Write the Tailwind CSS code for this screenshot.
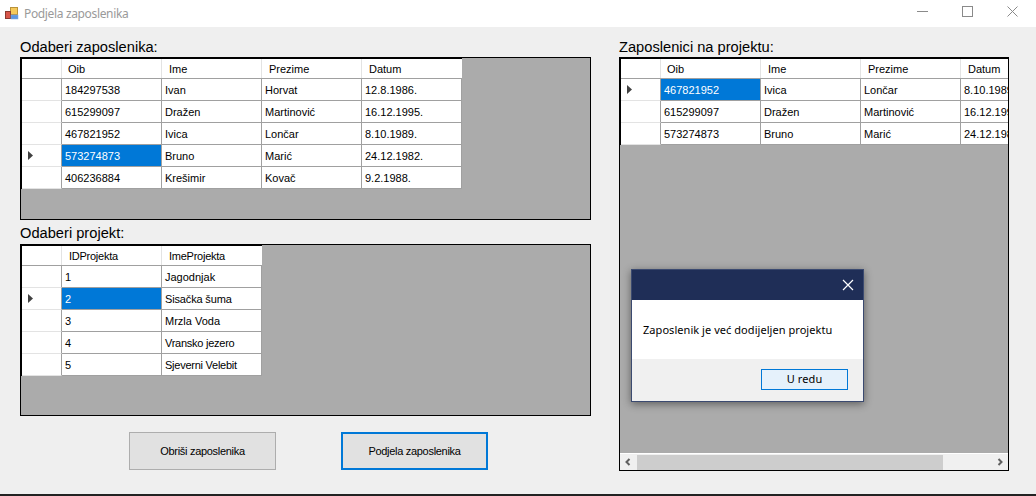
<!doctype html>
<html>
<head>
<meta charset="utf-8">
<script src="https://cdn.jsdelivr.net/npm/@tailwindcss/browser@4"></script>
</head>
<body class="m-0 overflow-hidden">
<div class="relative w-[1036px] h-[496px] bg-[#efefef] flex flex-col font-['Liberation_Sans',sans-serif] text-[11px] text-black">
  <!-- title bar -->
  <div class="h-[27px] bg-white flex items-center shrink-0">
    <svg class="ml-[4px] w-[16px] h-[16px]" viewBox="0 0 16 16">
      <rect x="6.5" y="1.5" width="7" height="7" fill="#f5c95a" stroke="#b8923a"/>
      <rect x="1.5" y="5.5" width="5" height="7" fill="#d8564a" stroke="#8a3a30"/>
      <rect x="7" y="9" width="7" height="4" fill="#5c96e0" stroke="#7fa8dc" stroke-width="0.5"/>
    </svg>
    <div class="ml-[4px] font-['Noto_Sans',sans-serif] text-[12px] tracking-[-0.35px] text-[#9a9a9a]">Podjela zaposlenika</div>
    <div class="ml-auto flex items-center mr-[18px] pb-[5px] gap-[34px]">
      <svg class="w-[11px] h-[11px]" viewBox="0 0 11 11"><path d="M0 5.5H11" stroke="#8a8a8a" fill="none"/></svg>
      <svg class="w-[11px] h-[11px]" viewBox="0 0 11 11"><rect x="0.5" y="0.5" width="10" height="10" stroke="#8a8a8a" fill="none"/></svg>
      <svg class="w-[11px] h-[11px]" viewBox="0 0 11 11"><path d="M0.5 0.5L10.5 10.5M10.5 0.5L0.5 10.5" stroke="#8a8a8a" fill="none"/></svg>
    </div>
  </div>

  <!-- body -->
  <div class="flex flex-1 min-h-0 pl-[20px] border-b-2 border-[#222]">
    <!-- left column -->
    <div class="w-[571px] flex flex-col">
      <div class="h-[30px] pt-[10px] text-[14.67px] leading-[20px]">Odaberi zaposlenika:</div>
      <div class="h-[163px] bg-[#ababab] border border-black">
        <div class="w-[441px] border-l border-t border-black">
          <div class="flex h-[19px] w-[440px] bg-white">
            <div class="w-[40px] border-r border-[#e3e3e3]"></div>
            <div class="w-[100px] pl-[6px] leading-[21px] border-r border-[#e3e3e3]">Oib</div>
            <div class="w-[100px] pl-[7px] leading-[21px] border-r border-[#e3e3e3]">Ime</div>
            <div class="w-[100px] pl-[7px] leading-[21px] border-r border-[#e3e3e3]">Prezime</div>
            <div class="w-[100px] pl-[7px] leading-[21px]">Datum</div>
          </div>
          <div class="flex h-[22px] w-[440px] bg-white border-t border-[#a0a0a0] leading-[23px]">
            <div class="w-[40px] border-r border-[#a0a0a0]"></div>
            <div class="w-[100px] pl-[3px] border-r border-[#a0a0a0]">184297538</div>
            <div class="w-[100px] pl-[3px] border-r border-[#a0a0a0]">Ivan</div>
            <div class="w-[100px] pl-[3px] border-r border-[#a0a0a0]">Horvat</div>
            <div class="w-[100px] pl-[3px] border-r border-[#a0a0a0]">12.8.1986.</div>
          </div>
          <div class="flex h-[22px] w-[440px] bg-white border-t border-[#a0a0a0] leading-[23px]">
            <div class="w-[40px] h-[22px] -mt-px border-t border-t-[#e3e3e3] border-r border-r-[#a0a0a0]"></div>
            <div class="w-[100px] pl-[3px] border-r border-[#a0a0a0]">615299097</div>
            <div class="w-[100px] pl-[3px] border-r border-[#a0a0a0]">Dražen</div>
            <div class="w-[100px] pl-[3px] border-r border-[#a0a0a0]">Martinović</div>
            <div class="w-[100px] pl-[3px] border-r border-[#a0a0a0]">16.12.1995.</div>
          </div>
          <div class="flex h-[22px] w-[440px] bg-white border-t border-[#a0a0a0] leading-[23px]">
            <div class="w-[40px] h-[22px] -mt-px border-t border-t-[#e3e3e3] border-r border-r-[#a0a0a0]"></div>
            <div class="w-[100px] pl-[3px] border-r border-[#a0a0a0]">467821952</div>
            <div class="w-[100px] pl-[3px] border-r border-[#a0a0a0]">Ivica</div>
            <div class="w-[100px] pl-[3px] border-r border-[#a0a0a0]">Lončar</div>
            <div class="w-[100px] pl-[3px] border-r border-[#a0a0a0]">8.10.1989.</div>
          </div>
          <div class="flex h-[22px] w-[440px] bg-white border-t border-[#a0a0a0] leading-[23px]">
            <div class="w-[40px] h-[22px] -mt-px border-t border-t-[#e3e3e3] border-r border-r-[#a0a0a0] flex items-center pl-[6px]"><svg class="w-[5px] h-[9px]" viewBox="0 0 5 9"><path d="M0 0L5 4.5L0 9Z" fill="#404040"/></svg></div>
            <div class="w-[100px] pl-[3px] border-r border-[#a0a0a0] bg-[#0078d7] text-white">573274873</div>
            <div class="w-[100px] pl-[3px] border-r border-[#a0a0a0]">Bruno</div>
            <div class="w-[100px] pl-[3px] border-r border-[#a0a0a0]">Marić</div>
            <div class="w-[100px] pl-[3px] border-r border-[#a0a0a0]">24.12.1982.</div>
          </div>
          <div class="flex h-[23px] w-[440px] bg-white border-y border-[#a0a0a0] leading-[23px]">
            <div class="w-[40px] h-[23px] -mt-px border-y border-y-[#e3e3e3] border-r border-r-[#a0a0a0]"></div>
            <div class="w-[100px] pl-[3px] border-r border-[#a0a0a0]">406236884</div>
            <div class="w-[100px] pl-[3px] border-r border-[#a0a0a0]">Krešimir</div>
            <div class="w-[100px] pl-[3px] border-r border-[#a0a0a0]">Kovač</div>
            <div class="w-[100px] pl-[3px] border-r border-[#a0a0a0]">9.2.1988.</div>
          </div>
        </div>
      </div>

      <div class="h-[24px] pt-[3px] text-[14.67px] leading-[20px]">Odaberi projekt:</div>
      <div class="h-[172px] bg-[#ababab] border border-black">
        <div class="w-[241px] border-l border-t border-black">
          <div class="flex h-[19px] w-[240px] bg-white">
            <div class="w-[40px] border-r border-[#e3e3e3]"></div>
            <div class="w-[100px] pl-[7px] leading-[21px] tracking-[-0.25px] border-r border-[#e3e3e3]">IDProjekta</div>
            <div class="w-[100px] pl-[7px] leading-[21px] tracking-[-0.25px]">ImeProjekta</div>
          </div>
          <div class="flex h-[22px] w-[240px] bg-white border-t border-[#a0a0a0] leading-[23px]">
            <div class="w-[40px] border-r border-[#a0a0a0]"></div>
            <div class="w-[100px] pl-[3px] border-r border-[#a0a0a0]">1</div>
            <div class="w-[100px] pl-[3px] border-r border-[#a0a0a0]">Jagodnjak</div>
          </div>
          <div class="flex h-[22px] w-[240px] bg-white border-t border-[#a0a0a0] leading-[23px]">
            <div class="w-[40px] h-[22px] -mt-px border-t border-t-[#e3e3e3] border-r border-r-[#a0a0a0] flex items-center pl-[6px]"><svg class="w-[5px] h-[9px]" viewBox="0 0 5 9"><path d="M0 0L5 4.5L0 9Z" fill="#404040"/></svg></div>
            <div class="w-[100px] pl-[3px] border-r border-[#a0a0a0] bg-[#0078d7] text-white">2</div>
            <div class="w-[100px] pl-[3px] tracking-[-0.15px] border-r border-[#a0a0a0]">Sisačka šuma</div>
          </div>
          <div class="flex h-[22px] w-[240px] bg-white border-t border-[#a0a0a0] leading-[23px]">
            <div class="w-[40px] h-[22px] -mt-px border-t border-t-[#e3e3e3] border-r border-r-[#a0a0a0]"></div>
            <div class="w-[100px] pl-[3px] border-r border-[#a0a0a0]">3</div>
            <div class="w-[100px] pl-[3px] border-r border-[#a0a0a0]">Mrzla Voda</div>
          </div>
          <div class="flex h-[22px] w-[240px] bg-white border-t border-[#a0a0a0] leading-[23px]">
            <div class="w-[40px] h-[22px] -mt-px border-t border-t-[#e3e3e3] border-r border-r-[#a0a0a0]"></div>
            <div class="w-[100px] pl-[3px] border-r border-[#a0a0a0]">4</div>
            <div class="w-[100px] pl-[3px] tracking-[-0.25px] border-r border-[#a0a0a0]">Vransko jezero</div>
          </div>
          <div class="flex h-[23px] w-[240px] bg-white border-y border-[#a0a0a0] leading-[23px]">
            <div class="w-[40px] h-[23px] -mt-px border-y border-y-[#e3e3e3] border-r border-r-[#a0a0a0]"></div>
            <div class="w-[100px] pl-[3px] border-r border-[#a0a0a0]">5</div>
            <div class="w-[100px] pl-[3px] tracking-[-0.25px] border-r border-[#a0a0a0]">Sjeverni Velebit</div>
          </div>
        </div>
      </div>

      <div class="flex mt-[16px] ml-[109px] gap-[65px]">
        <div class="w-[147px] h-[38px] bg-[#e1e1e1] border border-[#adadad] tracking-[-0.3px] flex items-center justify-center">Obriši zaposlenika</div>
        <div class="w-[147px] h-[38px] bg-[#e1e1e1] border-2 border-[#0078d7] tracking-[-0.3px] flex items-center justify-center">Podjela zaposlenika</div>
      </div>
    </div>

    <!-- right column -->
    <div class="w-[390px] ml-[28px] flex flex-col">
      <div class="h-[30px] pt-[10px] text-[14.67px] leading-[20px]">Zaposlenici na projektu:</div>
      <div class="h-[414px] bg-[#ababab] border border-black flex flex-col">
        <div class="flex-1 min-h-0 overflow-hidden">
          <div class="w-[441px] border-l border-t border-black">
            <div class="flex h-[19px] w-[440px] bg-white">
              <div class="w-[40px] border-r border-[#e3e3e3]"></div>
              <div class="w-[100px] pl-[6px] leading-[21px] border-r border-[#e3e3e3]">Oib</div>
              <div class="w-[100px] pl-[7px] leading-[21px] border-r border-[#e3e3e3]">Ime</div>
              <div class="w-[100px] pl-[7px] leading-[21px] border-r border-[#e3e3e3]">Prezime</div>
              <div class="w-[100px] pl-[7px] leading-[21px]">Datum</div>
            </div>
            <div class="flex h-[22px] w-[440px] bg-white border-t border-[#a0a0a0] leading-[23px]">
              <div class="w-[40px] border-r border-[#a0a0a0] flex items-center pl-[6px]"><svg class="w-[5px] h-[9px]" viewBox="0 0 5 9"><path d="M0 0L5 4.5L0 9Z" fill="#404040"/></svg></div>
              <div class="w-[100px] pl-[3px] border-r border-[#a0a0a0] bg-[#0078d7] text-white">467821952</div>
              <div class="w-[100px] pl-[3px] border-r border-[#a0a0a0]">Ivica</div>
              <div class="w-[100px] pl-[3px] border-r border-[#a0a0a0]">Lončar</div>
              <div class="w-[100px] pl-[3px] border-r border-[#a0a0a0]">8.10.1989.</div>
            </div>
            <div class="flex h-[22px] w-[440px] bg-white border-t border-[#a0a0a0] leading-[23px]">
              <div class="w-[40px] h-[22px] -mt-px border-t border-t-[#e3e3e3] border-r border-r-[#a0a0a0]"></div>
              <div class="w-[100px] pl-[3px] border-r border-[#a0a0a0]">615299097</div>
              <div class="w-[100px] pl-[3px] border-r border-[#a0a0a0]">Dražen</div>
              <div class="w-[100px] pl-[3px] border-r border-[#a0a0a0]">Martinović</div>
              <div class="w-[100px] pl-[3px] border-r border-[#a0a0a0]">16.12.1995.</div>
            </div>
            <div class="flex h-[23px] w-[440px] bg-white border-y border-[#a0a0a0] leading-[23px]">
              <div class="w-[40px] h-[23px] -mt-px border-y border-y-[#e3e3e3] border-r border-r-[#a0a0a0]"></div>
              <div class="w-[100px] pl-[3px] border-r border-[#a0a0a0]">573274873</div>
              <div class="w-[100px] pl-[3px] border-r border-[#a0a0a0]">Bruno</div>
              <div class="w-[100px] pl-[3px] border-r border-[#a0a0a0]">Marić</div>
              <div class="w-[100px] pl-[3px] border-r border-[#a0a0a0]">24.12.1982.</div>
            </div>
          </div>
        </div>
        <!-- scrollbar -->
        <div class="h-[17px] shrink-0 bg-[#f0f0f0] border-t border-white flex items-center">
          <svg class="w-[17px] h-[16px] shrink-0" viewBox="0 0 17 16"><path d="M9.5 5L6.5 8L9.5 11" stroke="#606060" stroke-width="2" fill="none"/></svg>
          <div class="w-[306px] h-[15px] bg-[#cdcdcd]"></div>
          <div class="flex-1"></div>
          <svg class="w-[17px] h-[16px] shrink-0" viewBox="0 0 17 16"><path d="M7.5 5L10.5 8L7.5 11" stroke="#606060" stroke-width="2" fill="none"/></svg>
        </div>
      </div>
    </div>
  </div>

  <!-- modal -->
  <div class="absolute left-[631px] top-[269px] w-[233px] h-[133px] border border-[#3b4a70] bg-white flex flex-col shadow-[0_2px_8px_rgba(0,0,0,0.45)] font-['Noto_Sans',sans-serif] text-[11px]">
    <div class="h-[30px] bg-[#1f2e57] flex items-center justify-end pr-[9px] shrink-0">
      <svg class="w-[12px] h-[12px]" viewBox="0 0 12 12"><path d="M1 1L11 11M11 1L1 11" stroke="#fff" stroke-width="1.2" fill="none"/></svg>
    </div>
    <div class="h-[59px] shrink-0 flex items-center pl-[11px] pt-[2px] tracking-[0.05px]">Zaposlenik je već dodijeljen projektu</div>
    <div class="flex-1 bg-[#f0f0f0] flex justify-end items-start pt-[10px] pr-[15px]">
      <div class="w-[87px] h-[21px] border border-[#0078d7] bg-[#e5f1fb] flex items-center justify-center tracking-[0.1px]">U redu</div>
    </div>
  </div>
</div>
</body>
</html>
